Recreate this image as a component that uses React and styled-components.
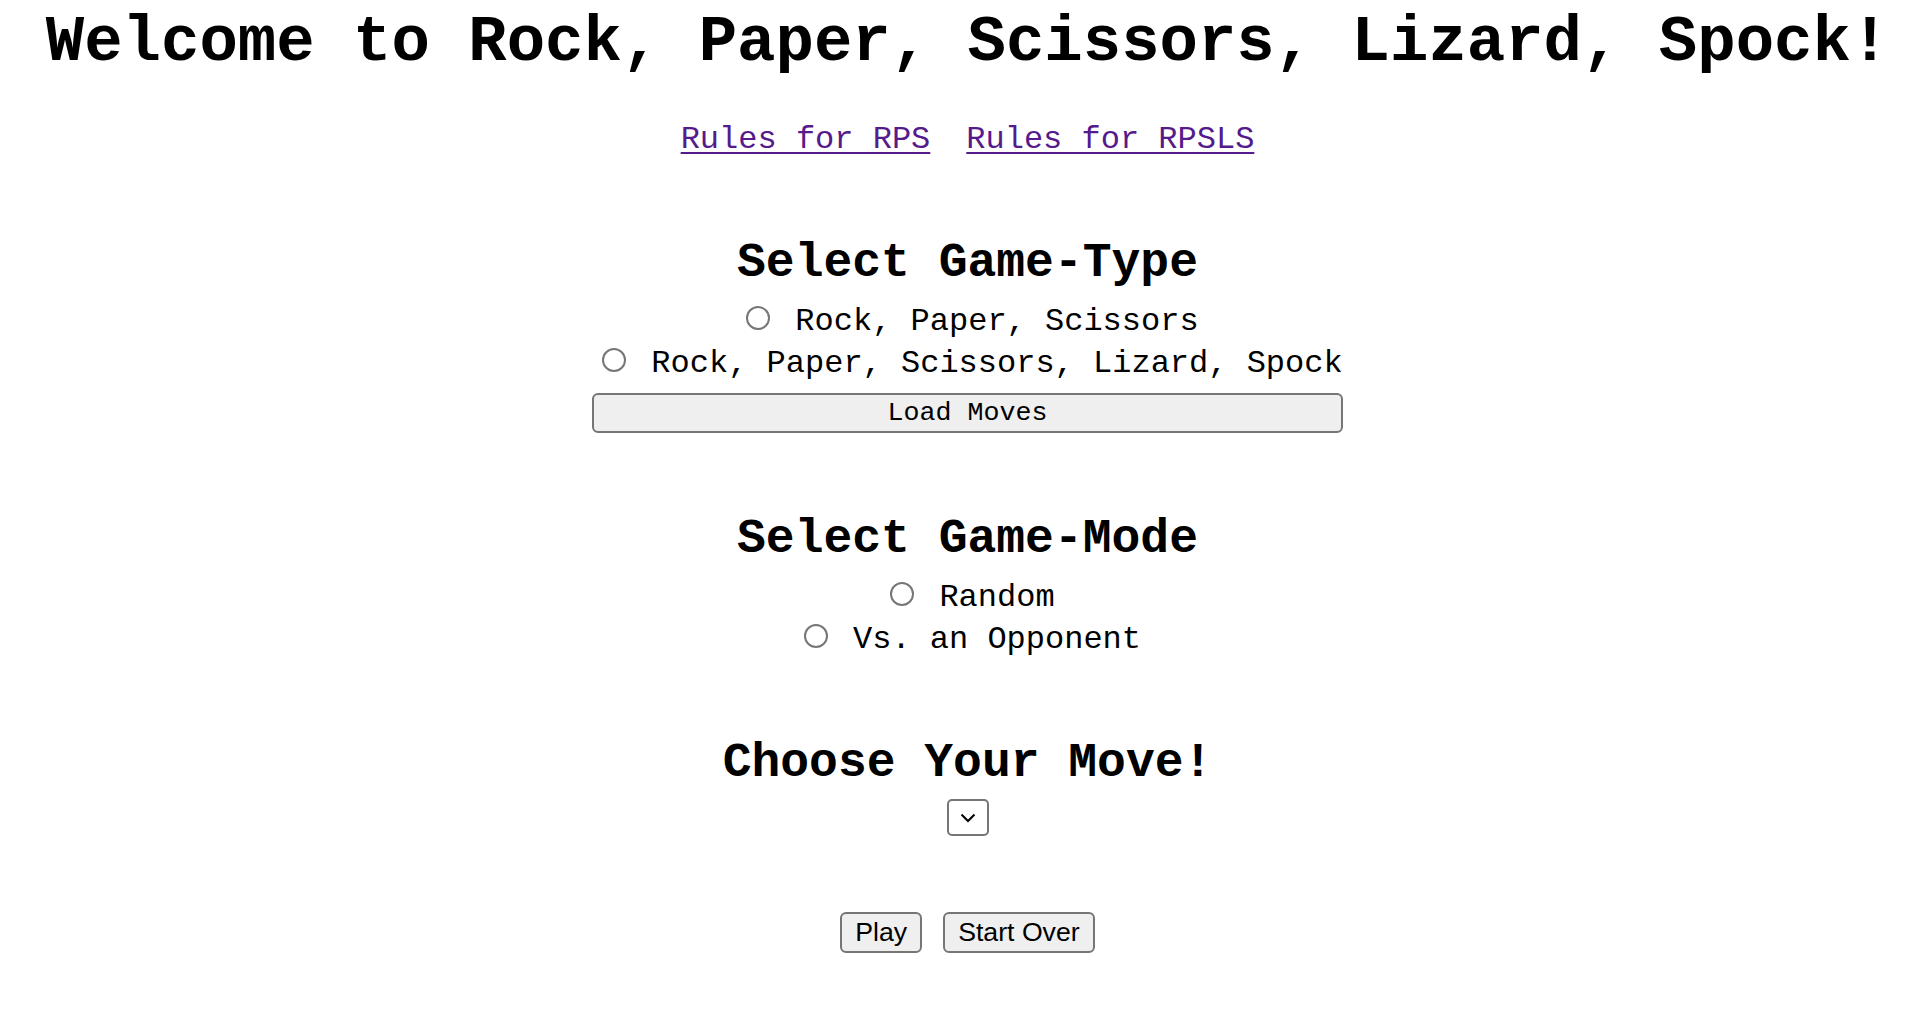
import React, { useState } from 'react';
import styled, { createGlobalStyle } from 'styled-components';

const GlobalStyle = createGlobalStyle`
  html, body {
    margin: 0;
    padding: 0;
    background: #fff;
  }
`;

const Page = styled.main`
  display: flex;
  flex-direction: column;
  align-items: center;
  padding: 0 0 40px 19px;
  font-family: "Liberation Mono", "Courier New", monospace;
  color: #000;
`;

const Title = styled.h1`
  margin: 0;
  padding-top: 6px;
  font-size: 64px;
  line-height: 74px;
  font-weight: bold;
  white-space: nowrap;
`;

const RulesNav = styled.nav`
  display: flex;
  gap: 36px;
  margin-top: 42px;
  font-size: 32px;
  line-height: 36px;

  a {
    color: #551a8b;
    text-decoration: underline;
    text-decoration-thickness: 2px;
    text-underline-offset: 4px;
  }
`;

const Section = styled.section`
  display: flex;
  flex-direction: column;
  align-items: center;
  margin-top: ${props => props.$top}px;
`;

const Heading = styled.h2`
  margin: 0;
  font-size: 48px;
  line-height: 54px;
  font-weight: bold;
  white-space: nowrap;
`;

const Options = styled.div`
  display: flex;
  flex-direction: column;
  align-items: center;
  margin-top: 7.5px;
  align-self: stretch;
`;

const OptionRow = styled.label`
  display: flex;
  align-items: center;
  gap: 25px;
  height: 42px;
  padding-left: 10px;
  font-size: 32px;
  white-space: nowrap;
  cursor: pointer;

  span {
    transform: translateY(3px);
  }
`;

const Radio = styled.input.attrs({ type: 'radio' })`
  appearance: none;
  box-sizing: border-box;
  width: 24px;
  height: 24px;
  margin: 0;
  border: 2px solid #767676;
  border-radius: 50%;
  background: #fff;
  cursor: pointer;

  &:checked {
    border-color: #0075ff;
    box-shadow: inset 0 0 0 4px #fff;
    background: #0075ff;
  }
`;

const Button = styled.button`
  box-sizing: border-box;
  height: ${props => props.$height || 41}px;
  padding: 0 13px;
  border: 2px solid #767676;
  border-radius: 6px;
  background: #efefef;
  color: #000;
  font-family: ${props => props.$mono ? '"Liberation Mono", "Courier New", monospace' : '"Liberation Sans", Arial, sans-serif'};
  font-size: 26.67px;
  cursor: pointer;
`;

const LoadButton = styled(Button)`
  align-self: stretch;
  margin-top: 12px;
`;

const SelectWrap = styled.div`
  position: relative;
  margin-top: 9.5px;
  width: 42px;
  height: 37px;

  svg {
    position: absolute;
    left: 13px;
    top: 14px;
    pointer-events: none;
  }
`;

const MoveSelect = styled.select`
  appearance: none;
  box-sizing: border-box;
  width: 100%;
  height: 100%;
  border: 2px solid #767676;
  border-radius: 5px;
  background: #fff;
  font-size: 26px;
`;

const Actions = styled.div`
  display: flex;
  gap: 21px;
  margin-top: 76px;
`;

const gameTypes = ['Rock, Paper, Scissors', 'Rock, Paper, Scissors, Lizard, Spock'];
const gameModes = ['Random', 'Vs. an Opponent'];

const App = () => {
  const [gameType, setGameType] = useState(null);
  const [gameMode, setGameMode] = useState(null);

  return (
    <>
      <GlobalStyle />
      <Page>
        <Title>Welcome to Rock, Paper, Scissors, Lizard, Spock!</Title>
        <RulesNav>
          <a href="#rps">Rules for RPS</a>
          <a href="#rpsls">Rules for RPSLS</a>
        </RulesNav>

        <Section $top={77.5}>
          <Heading>Select Game-Type</Heading>
          <Options>
            {gameTypes.map(type => (
              <OptionRow key={type}>
                <Radio name="game-type" checked={gameType === type} onChange={() => setGameType(type)} />
                <span>{type}</span>
              </OptionRow>
            ))}
          </Options>
          <LoadButton $mono $height={40}>Load Moves</LoadButton>
        </Section>

        <Section $top={78.5}>
          <Heading>Select Game-Mode</Heading>
          <Options>
            {gameModes.map(mode => (
              <OptionRow key={mode}>
                <Radio name="game-mode" checked={gameMode === mode} onChange={() => setGameMode(mode)} />
                <span>{mode}</span>
              </OptionRow>
            ))}
          </Options>
        </Section>

        <Section $top={78.5}>
          <Heading>Choose Your Move!</Heading>
          <SelectWrap>
            <MoveSelect aria-label="Your move" />
            <svg width="16" height="10" viewBox="0 0 16 10">
              <path d="M1.5 1.5 L8 8 L14.5 1.5" fill="none" stroke="#000" strokeWidth="2" />
            </svg>
          </SelectWrap>
        </Section>

        <Actions>
          <Button>Play</Button>
          <Button>Start Over</Button>
        </Actions>
      </Page>
    </>
  );
};

export default App;
